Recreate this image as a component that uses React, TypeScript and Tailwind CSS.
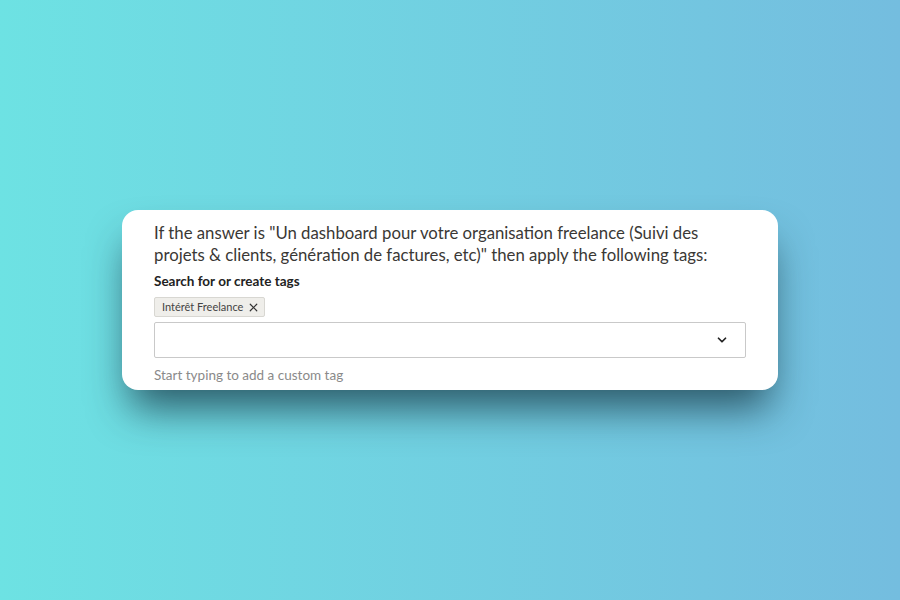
import { ChevronDown, X } from "lucide-react";

export default function App() {
  return (
    <div
      className="w-[900px] h-[600px] flex items-center justify-center bg-gradient-to-r from-[#6de2e3] to-[#74bddf]"
      style={{ fontFamily: "Lato, 'Liberation Sans', sans-serif" }}
    >
      <div className="w-[656px] h-[180px] bg-white rounded-[16px] px-8 pt-[12px] shadow-[0_26px_40px_-8px_rgba(35,75,90,0.9)]">
        <p className="text-[16.75px] leading-[22px] text-[#3a3835]">
          If the answer is "Un dashboard pour votre organisation freelance (Suivi des projets &amp; clients, génération de factures, etc)" then apply the following tags:
        </p>

        <div className="mt-[7px] text-[13.5px] font-bold text-[#222] leading-4">
          Search for or create tags
        </div>

        {/* selected tags */}
        <div className="mt-[8px] flex">
          <span className="h-[20px] flex items-center gap-[4px] pl-[7px] pr-[4px] bg-[#efeeea] border border-[#d8d7d2] rounded-[2px] text-[11px] text-[#444]">
            Intérêt Freelance
            <X size={13} strokeWidth={2.2} className="text-[#333]" />
          </span>
        </div>

        <div className="mt-[5px] h-[36px] border border-[#c9c9c9] rounded-[2px] flex items-center justify-end pr-[16px]">
          <ChevronDown size={14} strokeWidth={3} className="text-[#222]" />
        </div>

        <div className="mt-[9px] text-[13.5px] text-[#8a8a8a] leading-4">
          Start typing to add a custom tag
        </div>
      </div>
    </div>
  );
}
